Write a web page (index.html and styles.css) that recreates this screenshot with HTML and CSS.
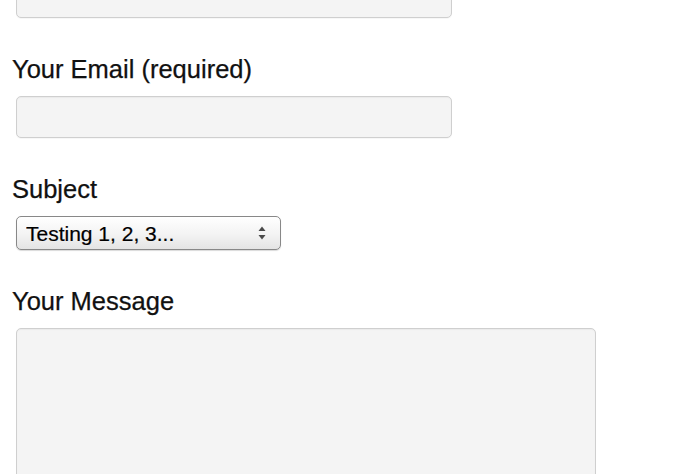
FILE: index.html
```html
<!DOCTYPE html>
<html>
<head>
<meta charset="utf-8">
<link rel="stylesheet" href="styles.css">
</head>
<body>
<form class="form">
  <div class="field">
    <input class="input" type="text" aria-label="Your Name (required)">
  </div>
  <div class="field">
    <label class="label">Your Email (required)</label>
    <input class="input" type="text">
  </div>
  <div class="field">
    <label class="label">Subject</label>
    <div class="select-wrap">
      <select class="select">
        <option>Testing 1, 2, 3...</option>
      </select>
      <svg class="arrows" width="8" height="14" viewBox="0 0 8 14">
        <path d="M4 0.5 L7.5 5 L0.5 5 Z" fill="#4a4a4a"/>
        <path d="M4 13.5 L7.5 9 L0.5 9 Z" fill="#4a4a4a"/>
      </svg>
    </div>
  </div>
  <div class="field">
    <label class="label">Your Message</label>
    <textarea class="textarea"></textarea>
  </div>
</form>
</body>
</html>
```
FILE: styles.css
```css
html, body {
  margin: 0;
  padding: 0;
  background: #ffffff;
  overflow: hidden;
}
body {
  font-family: "Liberation Sans", Arial, sans-serif;
  color: #111;
}
.form {
  display: flex;
  flex-direction: column;
  gap: 36px;
  margin-top: -24px;
  padding-left: 12px;
}
.field {
  display: flex;
  flex-direction: column;
  align-items: flex-start;
  gap: 12px;
}
.label {
  font-size: 25.5px;
  line-height: 30px;
  color: #111;
  -webkit-text-stroke: 0.25px #111;
}
.input {
  box-sizing: border-box;
  margin: 0 0 0 4px;
  width: 436px;
  height: 42px;
  border: 1px solid #cfcfcf;
  border-radius: 5px;
  background: #f4f4f4;
  box-shadow: inset 0 1px 1px rgba(0,0,0,0.04), 0 1px 0 rgba(0,0,0,0.03);
  outline: none;
}
.select-wrap {
  position: relative;
  margin-left: 4px;
  width: 265px;
  height: 34px;
}
.select {
  -webkit-appearance: none;
  appearance: none;
  box-sizing: border-box;
  width: 100%;
  height: 100%;
  margin: 0;
  padding: 0 0 0 9px;
  border: 1px solid #888;
  border-radius: 5px;
  background: linear-gradient(#ffffff, #f3f3f3 55%, #e4e4e4);
  box-shadow: 0 1px 1px rgba(0,0,0,0.15);
  font-family: "Liberation Sans", Arial, sans-serif;
  font-size: 21px;
  color: #000;
  -webkit-text-stroke: 0.2px #000;
  outline: none;
}
.arrows {
  position: absolute;
  right: 15px;
  top: 10px;
  pointer-events: none;
}
.textarea {
  box-sizing: border-box;
  margin: 0 0 0 4px;
  width: 580px;
  height: 200px;
  border: 1px solid #cfcfcf;
  border-radius: 5px;
  background: #f4f4f4;
  box-shadow: inset 0 1px 1px rgba(0,0,0,0.04);
  resize: none;
  outline: none;
}
```
